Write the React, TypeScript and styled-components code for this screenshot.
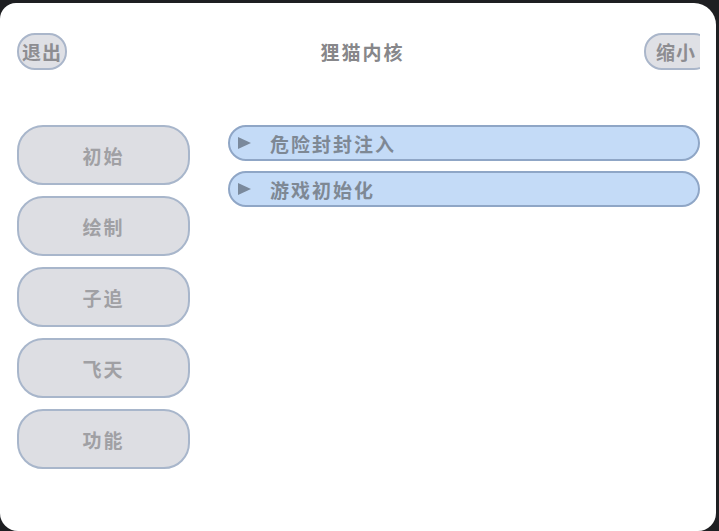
import React from "react";
import styled, { createGlobalStyle } from "styled-components";

const GlobalStyle = createGlobalStyle`
  html, body {
    margin: 0;
    padding: 0;
    background: #1e1f22;
  }
  body {
    font-family: "Noto Sans CJK SC", "Noto Sans", sans-serif;
  }
`;

const Frame = styled.div`
  width: 719px;
  height: 531px;
  padding: 3px 3px 0 0;
  box-sizing: border-box;
`;

const Card = styled.div`
  height: 100%;
  background: #ffffff;
  border-radius: 16px 22px 18px 18px;
  padding: 29px 16px 0 17px;
  box-sizing: border-box;
  overflow: hidden;
`;

const Header = styled.div`
  display: grid;
  grid-template-columns: 1fr auto 1fr;
  align-items: center;
  height: 38px;
  overflow: hidden;
`;

const Title = styled.div`
  font-size: 19px;
  font-weight: 700;
  letter-spacing: 2px;
  color: #87878a;
  padding-left: 8px;
`;

const PillButton = styled.button<{ $align: "start" | "end" }>`
  justify-self: ${(p) => p.$align};
  height: 37px;
  padding: ${(p) => (p.$align === "end" ? "0 14px 0 10px" : "0 3px")};
  margin-right: ${(p) => (p.$align === "end" ? "-12px" : "0")};
  border: 2px solid #aab6ca;
  border-radius: 18px;
  background: #dfe0e5;
  color: #8d8d91;
  font-family: inherit;
  font-size: 19px;
  font-weight: 700;
  letter-spacing: 1px;
  box-sizing: border-box;
`;

const Body = styled.div`
  display: flex;
  gap: 38px;
  margin-top: 55px;
`;

const Nav = styled.div`
  display: flex;
  flex-direction: column;
  gap: 11px;
  width: 173px;
  flex-shrink: 0;
`;

const NavButton = styled.button`
  height: 60px;
  border: 2px solid #a8b6cb;
  border-radius: 26px;
  background: #dddee3;
  color: #a0a0a4;
  font-family: inherit;
  font-size: 19px;
  font-weight: 700;
  letter-spacing: 2px;
  box-sizing: border-box;
`;

const List = styled.div`
  flex: 1;
  display: flex;
  flex-direction: column;
  gap: 10px;
`;

const Row = styled.div`
  display: flex;
  align-items: center;
  height: 36px;
  padding-left: 8px;
  border: 2px solid #8fa6c6;
  border-radius: 18px;
  background: #c4dbf7;
  box-sizing: border-box;
`;

const Arrow = styled.span`
  width: 0;
  height: 0;
  border-top: 6px solid transparent;
  border-bottom: 6px solid transparent;
  border-left: 13px solid #7a899c;
  margin-right: 19px;
`;

const RowLabel = styled.span`
  font-size: 19px;
  font-weight: 700;
  letter-spacing: 2px;
  color: #7e8894;
`;

const navItems = ["初始", "绘制", "子追", "飞天", "功能"];
const rows = ["危险封封注入", "游戏初始化"];

export default function App() {
  return (
    <>
      <GlobalStyle />
      <Frame>
        <Card>
          <Header>
            <PillButton $align="start">退出</PillButton>
            <Title>狸猫内核</Title>
            <PillButton $align="end">缩小</PillButton>
          </Header>
          <Body>
            <Nav>
              {navItems.map((n) => (
                <NavButton key={n}>{n}</NavButton>
              ))}
            </Nav>
            <List>
              {rows.map((r) => (
                <Row key={r}>
                  <Arrow />
                  <RowLabel>{r}</RowLabel>
                </Row>
              ))}
            </List>
          </Body>
        </Card>
      </Frame>
    </>
  );
}
